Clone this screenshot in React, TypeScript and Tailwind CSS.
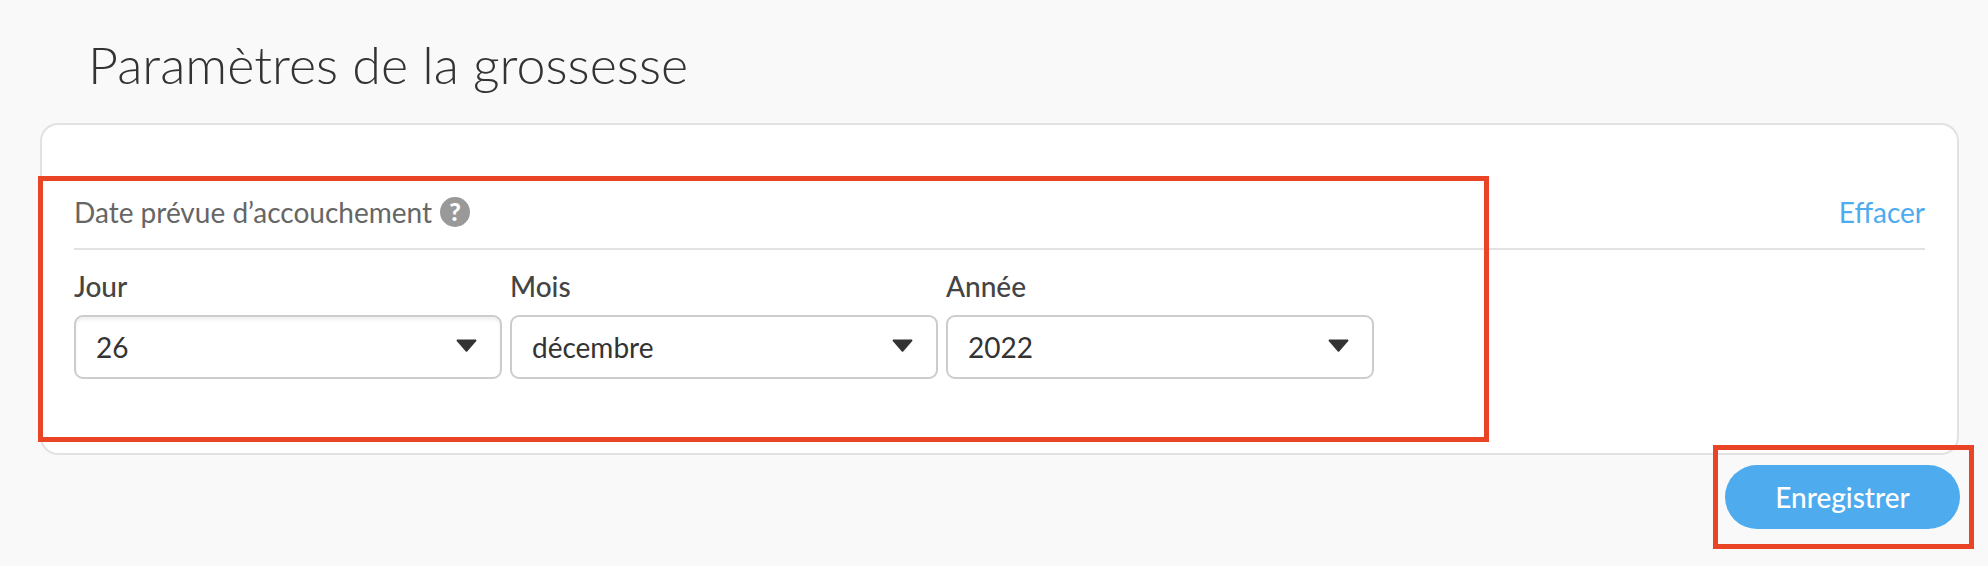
import type { ReactNode } from "react";

const font = { fontFamily: "Lato, 'Liberation Sans', sans-serif" };

function Caret() {
  return (
    <svg width="21" height="13" viewBox="0 0 21 13" className="shrink-0">
      <path d="M1 0.5h19l.5 1.2-9.5 11h-1L.5 1.7z" fill="#333333" />
    </svg>
  );
}

function Field({ label, value, shadow }: { label: string; value: string; shadow?: boolean }) {
  return (
    <div className="flex flex-col w-[428px]">
      <label className="h-[42px] text-[28px] leading-[27px] font-medium text-[#444444]">{label}</label>
      <div
        className={`flex items-center justify-between h-[64px] pl-[20px] pr-[23px] bg-white border-2 border-[#cccccc] rounded-[9px] ${
          shadow ? "shadow-[inset_0_3px_3px_rgba(0,0,0,0.06)]" : ""
        }`}
      >
        <span className="text-[28px] leading-[33px] text-[#333333]">{value}</span>
        <span className="mb-[4px]">
          <Caret />
        </span>
      </div>
    </div>
  );
}

function Annotation({ className }: { className: string }) {
  return <div className={`absolute border-[5px] border-[#e94425] pointer-events-none ${className}`} />;
}

function HelpIcon(): ReactNode {
  return (
    <span className="flex items-center justify-center w-[30px] h-[30px] mb-[2px] rounded-full bg-[#999999] text-white text-[25px] leading-none font-black">
      ?
    </span>
  );
}

export default function App() {
  return (
    <div style={font} className="relative w-[1988px] h-[566px] overflow-hidden bg-[#f9f9f9]">
      <h1 className="pl-[88px] pt-[34px] h-[123px] text-[52px] leading-[60px] font-light text-[#333333]">
        Paramètres de la grossesse
      </h1>

      <div className="ml-[40px] w-[1919px] h-[332px] bg-white border-2 border-[#e2e2e2] rounded-[18px] pl-[32px] pr-[32px] pt-[66px]">
        <div className="flex items-center justify-between h-[59px] pb-[14px] border-b-2 border-[#e2e2e2]">
          <div className="flex items-center gap-[8px]">
            <span className="text-[28px] leading-[31px] text-[#666666]">Date prévue d’accouchement</span>
            <HelpIcon />
          </div>
          <a className="text-[28px] leading-[31px] text-[#4dabee]">Effacer</a>
        </div>
        <div className="flex gap-[8px] pt-[23px]">
          <Field label="Jour" value="26" shadow />
          <Field label="Mois" value="décembre" />
          <Field label="Année" value="2022" />
        </div>
      </div>

      <div className="flex justify-end pr-[28px] pt-[10px]">
        <button className="w-[235px] h-[64px] rounded-full bg-[#4dabee] text-white text-[28px] font-medium">
          Enregistrer
        </button>
      </div>

      <Annotation className="left-[38px] top-[176px] w-[1451px] h-[266px]" />
      <Annotation className="left-[1713px] top-[445px] w-[261px] h-[104px]" />
    </div>
  );
}
